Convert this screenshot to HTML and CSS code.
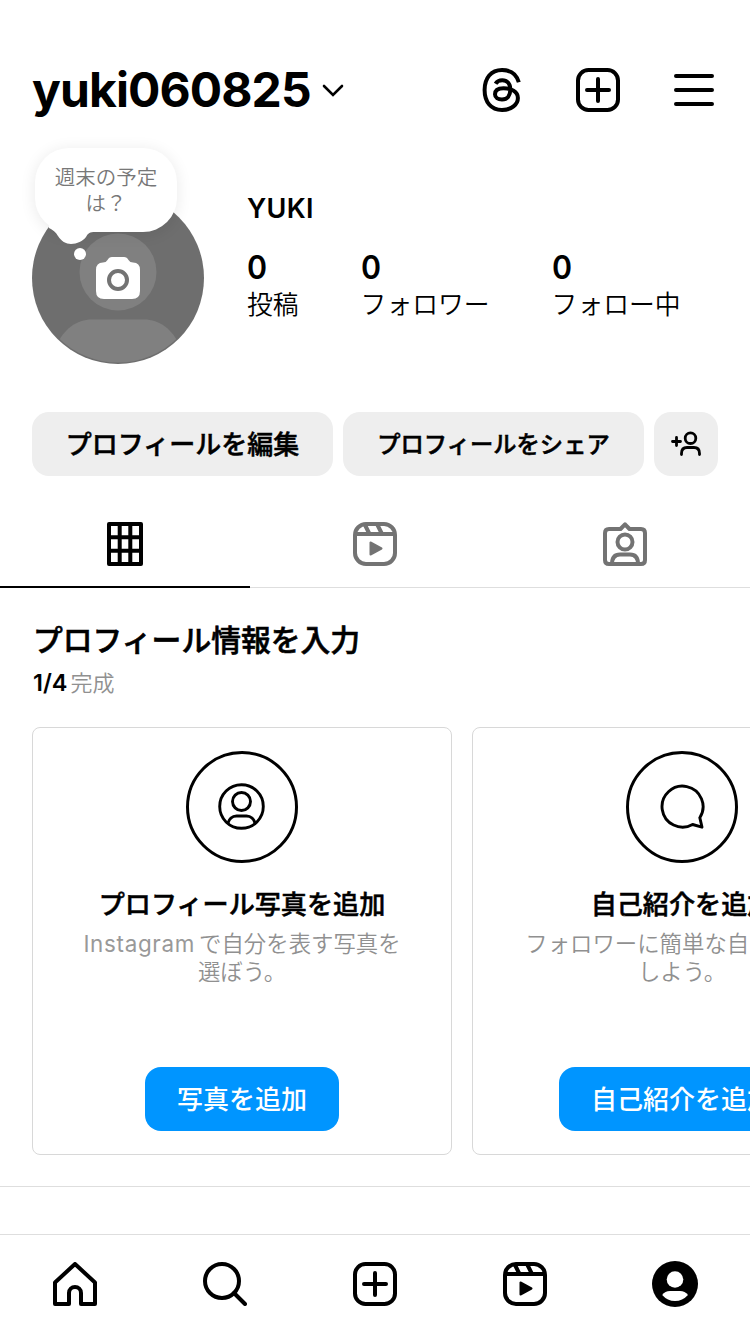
FILE: index.html
```html
<!DOCTYPE html>
<html lang="ja">
<head>
<meta charset="utf-8">
<title>yuki060825</title>
<link rel="stylesheet" href="styles.css">
</head>
<body>
<header class="header">
  <h1 class="username">yuki060825</h1>
  <svg class="chevron" width="22" height="14" viewBox="0 0 22 14"><path d="M2 2l9 9 9-9"/></svg>
  <div class="header-actions">
    <svg class="icon" width="44" height="44" viewBox="0 0 44 44"><path d="M38.800 14.300C36.500 6 31 2 22 2C11 2 4.600 10 4.600 22C4.600 34 11 42 22 42C31.500 42 37.900 36.500 37.900 30C37.900 23.500 31 20.200 23.500 20.200C17 20.200 15 23 15 26.300C15 29.700 18 31.500 22 31.500C27.500 31.500 30.300 27.500 30.300 21.500C30.300 15.500 27 12.300 22.300 12.300C19.500 12.300 17 13.300 15.600 15.800"/></svg>
    <svg class="icon" width="44" height="44" viewBox="0 0 44 44"><rect x="2" y="2" width="40" height="40" rx="10.500"/><path class="round" d="M22 11v22M11 22h22"/></svg>
    <svg class="icon" width="44" height="44" viewBox="0 0 44 44"><path class="round" d="M4 8h36M4 22h36M4 36h36"/></svg>
  </div>
</header>

<section class="profile">
  <div class="avatar">
    <svg width="172" height="172" viewBox="0 0 172 172">
      <defs><clipPath id="disc"><circle cx="86" cy="86" r="84.500"/></clipPath></defs>
      <circle cx="86" cy="86" r="86" fill="#6e6e6e"/>
      <g clip-path="url(#disc)" fill="#808080">
        <circle cx="86" cy="80" r="38.500"/>
        <path d="M24 155C31 137 45 127.500 60 127.500H112C127 127.500 141 137 148 155V172H24Z"/>
      </g>
      <path fill="#fff" d="M71 70.500Q74 70.500 75.500 68Q77 65 80 65H92Q95 65 96.500 68Q98 70.500 101 70.500Q108 70.500 108 78V99Q108 107 100 107H72Q64 107 64 99V78Q64 70.500 71 70.500Z"/>
      <circle cx="86" cy="88" r="9" fill="#fff" stroke="#737373" stroke-width="4"/>
    </svg>
    <div class="note">週末の予定<br>は？<svg class="tail" width="48" height="36" viewBox="0 0 48 36"><path fill="#fff" d="M0 16C7 20 7 21 9 24C12 29 17 32 22 32C28 32 34 29 37 25C39 21 41 20 46 20V10H0Z"/></svg><span class="dot"></span></div>
  </div>
  <div class="info">
    <h2 class="name">YUKI</h2>
    <div class="stats">
      <div class="stat"><b>0</b><span>投稿</span></div>
      <div class="stat"><b>0</b><span>フォロワー</span></div>
      <div class="stat"><b>0</b><span>フォロー中</span></div>
    </div>
  </div>
</section>

<div class="actions">
  <button class="action edit"><span>プロフィールを編集</span></button>
  <button class="action share"><span>プロフィールをシェア</span></button>
  <button class="action discover" aria-label="友達を探す"><svg width="32" height="28" viewBox="0 0 32 28"><path d="M2.500 11.500h8M6.500 7.500v8"/><circle cx="20.500" cy="8.200" r="5.300"/><path d="M11.500 24.500v-1c0-4 2.200-6 5.500-6h7c3.300 0 5.500 2 5.500 6v1"/></svg></button>
</div>

<nav class="tabs">
  <div class="tab active"><svg class="icon" width="44" height="44" viewBox="0 0 44 44"><path d="M6 2h32v40H6zM16.700 2v40M27.300 2v40M6 15.300h32M6 28.700h32"/></svg></div>
  <div class="tab"><svg class="icon" width="44" height="44" viewBox="0 0 44 44"><rect x="2" y="2" width="40" height="40" rx="11"/><path d="M2 12h40M12 3l4.500 9M24.500 3l4.500 9"/><path class="solid" d="M17.500 20.500v12L28.500 26.500z"/></svg></div>
  <div class="tab"><svg class="icon" width="44" height="44" viewBox="0 0 44 44"><path d="M6 7h11.500L22 2.300 26.500 7H38q4 0 4 4v27q0 4-4 4H6q-4 0-4-4V11q0-4 4-4z"/><circle cx="22" cy="20" r="7.500"/><path d="M9 42c0-7 3.500-9.500 8-9.500h10c4.500 0 8 2.500 8 9.500"/></svg></div>
</nav>

<section class="complete">
  <h3 class="complete-title">プロフィール情報を入力</h3>
  <p class="progress"><b>1/4</b><span>完成</span></p>
  <div class="cards">
    <article class="card">
      <div class="ring"><svg width="48" height="48" viewBox="0 0 48 48"><circle cx="23.500" cy="23.500" r="21.800"/><circle cx="23.500" cy="18.500" r="9"/><path d="M10 40C11 36.500 14 33 18.500 33H28.500C33 33 36 36.500 37 40"/></svg></div>
      <h4>プロフィール写真を追加</h4>
      <p><span class="latin">Instagram</span>で自分を表す写真を<br>選ぼう。</p>
      <button class="primary"><span>写真を追加</span></button>
    </article>
    <article class="card">
      <div class="ring"><svg width="48" height="48" viewBox="0 0 48 48"><path d="M41.800 34.700A20.500 20.500 0 1 0 34.600 41.500L44 44.200Z"/></svg></div>
      <h4>自己紹介を追加</h4>
      <p>フォロワーに簡単な自己紹介を<br>しよう。</p>
      <button class="primary"><span>自己紹介を追加</span></button>
    </article>
  </div>
</section>

<nav class="bottom-nav">
  <svg class="icon" width="44" height="44" viewBox="0 0 44 44"><path d="M2 20.500L22 2l20 18.500v21.500H28V31a6 6 0 0 0-12 0v11H2z"/></svg>
  <svg class="icon" width="44" height="44" viewBox="0 0 44 44"><circle cx="19" cy="19" r="17"/><path class="round" d="M31 31l11 11"/></svg>
  <svg class="icon" width="44" height="44" viewBox="0 0 44 44"><rect x="2" y="2" width="40" height="40" rx="10.500"/><path class="round" d="M22 11v22M11 22h22"/></svg>
  <svg class="icon" width="44" height="44" viewBox="0 0 44 44"><rect x="2" y="2" width="40" height="40" rx="11"/><path d="M2 12h40M12 3l4.500 9M24.500 3l4.500 9"/><path class="solid" d="M17.500 20.500v12L28.500 26.500z"/></svg>
  <svg width="46" height="46" viewBox="0 0 46 46"><circle cx="23" cy="23" r="23"/><g fill="#fff"><circle cx="23" cy="18.500" r="8.300"/><path d="M10.200 34Q13 30 18 30H28Q33 30 36 34Q30.500 40 23 40T10.200 34Z"/></g></svg>
</nav>
</body>
</html>
```
FILE: styles.css
```css
* { box-sizing: border-box; margin: 0; padding: 0; }
html { overflow: hidden; }
body {
  width: 750px;
  height: 1334px;
  overflow: hidden;
  display: flex;
  flex-direction: column;
  background: #fff;
  color: #000;
  font-family: Inter, "Noto Sans CJK JP", sans-serif;
}
svg { display: block; flex: none; }
button { border: 0; font-family: inherit; white-space: nowrap; }

.icon { fill: none; stroke: currentColor; stroke-width: 4; stroke-linejoin: round; }
.icon .round { stroke-linecap: round; }
.icon .solid { fill: currentColor; stroke-width: 2; }

.header {
  height: 192px;
  padding: 60px 34px 72px 32px;
  display: flex;
  align-items: center;
}
.username { font-size: 48px; line-height: 60px; font-weight: 700; letter-spacing: -0.900px; }
.chevron { margin: 2px 0 0 11px; fill: none; stroke: #000; stroke-width: 2.600; stroke-linecap: round; }
.header-actions { margin-left: auto; display: flex; }
.header-actions .icon + .icon { margin-left: 52px; }

.profile { display: flex; height: 220px; padding-left: 32px; }
.avatar { position: relative; width: 172px; height: 172px; }
.note {
  position: absolute;
  left: 3px;
  top: -44px;
  width: 142px;
  height: 84px;
  padding-top: 17px;
  border-radius: 34px;
  background: #fff;
  color: #777;
  font-size: 20.500px;
  font-weight: 350;
  line-height: 26px;
  text-align: center;
  box-shadow: 0 2px 16px rgba(0, 0, 0, 0.090);
}
.tail, .dot { position: absolute; }
.tail { left: 14px; top: 64px; }
.dot { left: 39px; top: 100px; width: 12px; height: 12px; border-radius: 50%; background: #fff; }

.info { margin-left: 43px; padding-top: 1px; }
.name { font-size: 27px; line-height: 32px; font-weight: 600; letter-spacing: 0.300px; }
.stats { display: flex; gap: 62px; margin-top: 25px; }
.stat { display: flex; flex-direction: column; }
.stat b { font-size: 32px; line-height: 36px; font-weight: 600; transform: scaleX(0.950); transform-origin: left; }
.stat span { font-size: 25.800px; line-height: 38px; font-weight: 350; }

.actions { display: flex; gap: 10px; padding-left: 32px; }
.action {
  height: 64px;
  width: 301px;
  border-radius: 17px;
  background: #eee;
  color: #000;
  font-weight: 500;
  -webkit-text-stroke: 0.500px #000;
  display: flex;
  align-items: center;
  justify-content: center;
}
.edit { font-size: 26px; }
.edit span { padding-bottom: 3px; }
.share { font-size: 23.300px; }
.share span { padding-bottom: 2px; }
.discover { width: 64px; }
.discover svg { fill: none; stroke: #000; stroke-width: 2.800; stroke-linecap: round; }

.tabs { display: flex; height: 112px; border-bottom: 1px solid #dedede; }
.tab { flex: 1; padding-top: 46px; display: flex; justify-content: center; color: #737373; height: 112px; }
.active { color: #000; border-bottom: 2px solid #000; }

.complete { padding: 33px 0 0 33px; height: 599px; border-bottom: 1px solid #dedede; }
.complete-title { font-size: 29.800px; line-height: 38px; font-weight: 500; -webkit-text-stroke: 0.600px #000; }
.progress { display: flex; align-items: baseline; gap: 3px; line-height: 30px; margin-top: 9px; font-size: 22px; font-weight: 350; color: #909090; }
.progress b { font-size: 23.500px; font-weight: 600; color: #000; }
.cards { display: flex; gap: 20px; margin: 29px 0 0 -1px; }
.card {
  flex: none;
  width: 420px;
  height: 428px;
  border: 1px solid #d8d8d8;
  border-radius: 8px;
  padding: 23px 0;
  display: flex;
  flex-direction: column;
  align-items: center;
  text-align: center;
}
.ring { width: 112px; height: 112px; border: 3px solid #000; border-radius: 50%; display: flex; align-items: center; justify-content: center; }
.ring svg { fill: none; stroke: #000; stroke-width: 2.900; stroke-linejoin: round; }
.card h4 { font-size: 26.100px; line-height: 38px; font-weight: 500; -webkit-text-stroke: 0.500px #000; margin-top: 23px; }
.card p { font-size: 22.400px; line-height: 28px; font-weight: 350; color: #909090; margin-top: 6px; white-space: nowrap; }
.latin { margin-right: 4px; font-weight: 400; letter-spacing: 0.700px; color: #999; }
.primary { margin-top: auto; height: 64px; padding: 0 32px; border-radius: 16px; background: #0095ff; color: #fff; font-size: 26px; font-weight: 500; }
.primary span { display: block; padding-bottom: 3px; }

.bottom-nav {
  margin-top: 47px;
  height: 100px;
  padding-bottom: 2px;
  border-top: 1px solid #dedede;
  display: grid;
  grid-template-columns: repeat(5, 1fr);
  place-items: center;
}
```
